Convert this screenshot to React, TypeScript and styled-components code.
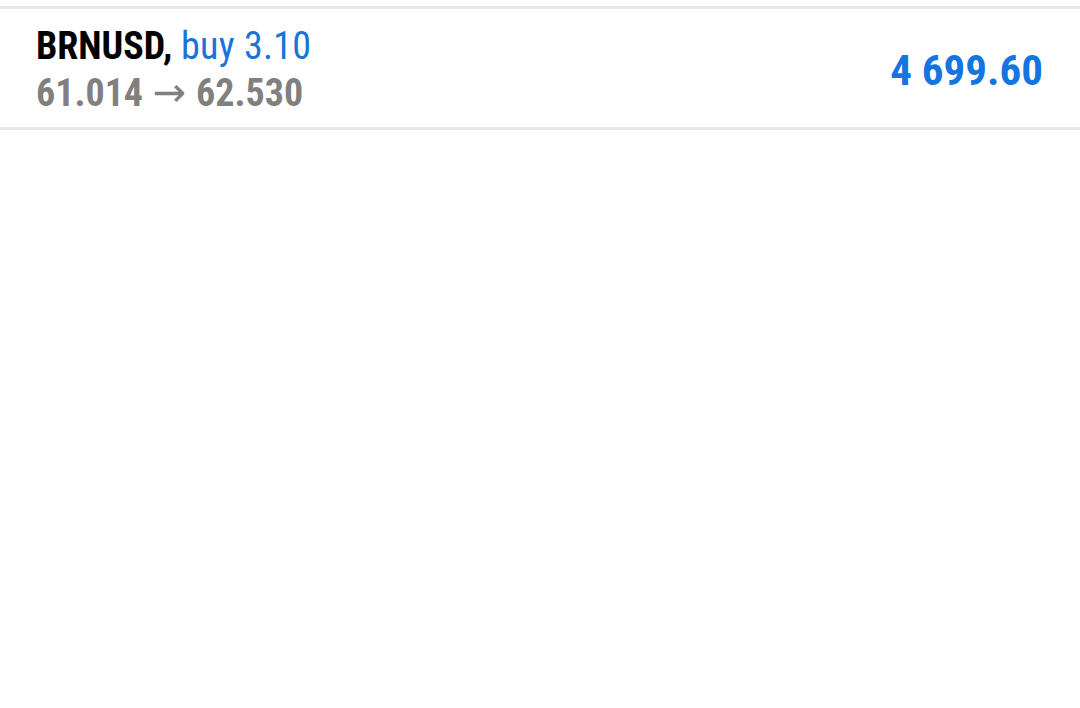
import styled, { createGlobalStyle } from "styled-components";

const Global = createGlobalStyle`
  html, body {
    margin: 0;
    padding: 0;
    background: #fff;
  }
  body {
    font-family: "Roboto Condensed", Roboto, "Liberation Sans", sans-serif;
    font-stretch: condensed;
  }
`;

const Page = styled.div`
  width: 1080px;
  height: 708px;
  background: #fff;
  padding-top: 6px;
  box-sizing: border-box;
`;

const Row = styled.div`
  display: flex;
  align-items: center;
  justify-content: space-between;
  height: 124px;
  padding: 3px 37px 0 36px;
  border-top: 3px solid #e8e8e8;
  border-bottom: 3px solid #e8e8e8;
  box-sizing: border-box;
`;

const Info = styled.div`
  display: flex;
  flex-direction: column;
`;

const Line = styled.div<{ $muted?: boolean }>`
  font-size: 38px;
  line-height: 46px;
  font-weight: ${(p) => (p.$muted ? 700 : 400)};
  color: ${(p) => (p.$muted ? "#808080" : "#000")};
  white-space: nowrap;
`;

const Symbol = styled.span`
  font-weight: 700;
  color: #000;
`;

const Deal = styled.span`
  color: #1874d8;
  letter-spacing: 0.3px;
`;

const Arrow = styled.span`
  font-family: "DejaVu Sans", sans-serif;
  font-stretch: normal;
  font-weight: 400;
  font-size: 40px;
  margin: 0 1px;
`;

const Profit = styled.div`
  font-size: 43px;
  font-weight: 700;
  color: #1474e0;
`;

export default function App() {
  return (
    <Page>
      <Global />
      <Row>
        <Info>
          <Line>
            <Symbol>BRNUSD,</Symbol> <Deal>buy 3.10</Deal>
          </Line>
          <Line $muted>
            61.014 <Arrow>→</Arrow> 62.530
          </Line>
        </Info>
        <Profit>4 699.60</Profit>
      </Row>
    </Page>
  );
}
